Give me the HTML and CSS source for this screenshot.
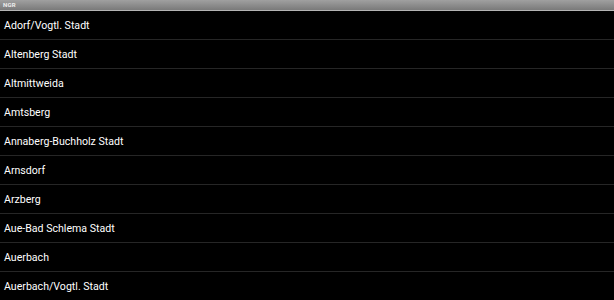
FILE: index.html
```html
<!DOCTYPE html>
<html>
<head>
<meta charset="utf-8">
<link rel="stylesheet" href="styles.css">
</head>
<body>
<div class="header">NGR</div>
<ul class="list">
  <li class="item">Adorf/Vogtl. Stadt</li>
  <li class="item">Altenberg Stadt</li>
  <li class="item">Altmittweida</li>
  <li class="item">Amtsberg</li>
  <li class="item">Annaberg-Buchholz Stadt</li>
  <li class="item">Arnsdorf</li>
  <li class="item">Arzberg</li>
  <li class="item">Aue-Bad Schlema Stadt</li>
  <li class="item">Auerbach</li>
  <li class="item">Auerbach/Vogtl. Stadt</li>
</ul>
</body>
</html>
```
FILE: styles.css
```css
html, body {
  margin: 0;
  padding: 0;
  background: #000;
  overflow: hidden;
}
body {
  font-family: Roboto, "Noto Sans", sans-serif;
  color: #fff;
}
.header {
  height: 10px;
  border-bottom: 1px solid #b4b4b4;
  background: linear-gradient(#a0a0a0, #7a7a7a);
  font-size: 6px;
  font-weight: bold;
  line-height: 10px;
  padding-left: 3px;
  color: #eee;
  letter-spacing: 0.2px;
}
.list {
  list-style: none;
  margin: 0;
  padding: 0;
}
.item {
  height: 26px;
  padding-top: 2px;
  line-height: 26px;
  border-bottom: 1px solid #262626;
  padding-left: 4px;
  font-size: 10.6px;
  white-space: nowrap;
}
```
